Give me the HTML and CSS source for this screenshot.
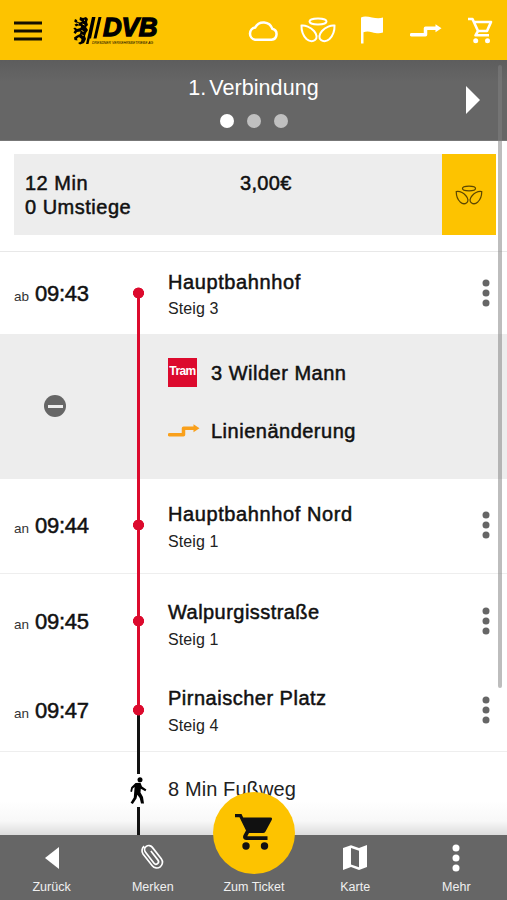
FILE: index.html
```html
<!DOCTYPE html>
<html lang="de">
<head>
<meta charset="utf-8">
<title>DVB – Verbindung</title>
<link rel="stylesheet" href="styles.css">
</head>
<body>
<svg class="defs" aria-hidden="true">
  <symbol id="angel" viewBox="0 0 36 26">
    <ellipse cx="18" cy="4.500" rx="8.500" ry="3"/>
    <path d="M1.500 8.500C5 8 10.500 10 14 14C17 17.500 17.500 21 15 23C12.500 25 9 24.300 6.500 22C3.500 19 1.300 14 1.500 8.500Z"/>
    <path d="M34.500 8.500C31 8 25.500 10 22 14C19 17.500 18.500 21 21 23C23.500 25 27 24.300 29.500 22C32.500 19 34.700 14 34.500 8.500Z"/>
  </symbol>
  <symbol id="detour" viewBox="0 0 32 14">
    <path d="M1.500 10.800H15.500V4.200H26" fill="none" stroke="currentColor" stroke-width="3.500" stroke-linejoin="round" stroke-linecap="round"/>
    <path d="M25.500 .2L31.500 4.200L25.500 8.200Z" fill="currentColor"/>
  </symbol>
  <symbol id="dots" viewBox="0 0 8 28">
    <circle cx="4" cy="4" r="3.500"/><circle cx="4" cy="14" r="3.500"/><circle cx="4" cy="24" r="3.500"/>
  </symbol>
</svg>
<div class="app">
  <header class="topbar">
    <svg class="burger" viewBox="0 0 28 20"><path d="M0 2H28M0 10H28M0 18H28"/></svg>
    <div class="logo">
      <svg class="lion" viewBox="0 0 30 30">
        <path d="M7 1L10 2L13 1L15 3L14 6L15 9L13 11L15 14L13 17L12 20L13 23L11 27L7 28.500L5 27L8 25.500L8.500 23L6 21L4 22.500L4.500 24.500L1.500 24L1 21.500L4 19.500L7 18L7.500 15.500L4 16L2.500 18L.5 16.500L2 14L.3 12.500L2 11.500L4 13L7.500 12L8 10L5 9.500L3 10.500L1.500 8.500L4 7.500L1.200 5.500L2 3L4 4L4.500 6L7 6.500L9 5.500L6.500 4Z"/>
        <path class="gap" d="M3.500 6.800L6 8.200M8.500 14L10.500 16M9.500 8L11.500 9M9 18.500L10.500 20M11 4.500L12 4"/>
        <path d="M19 1H21.500L15.500 28H13ZM19 1H22.500L18 22.500H15ZM25.500 1H28.500L23.500 22.500H20.500Z"/>
      </svg>
      <div class="wordmark"><span class="dvb">DVB</span><span class="claim">DRESDNER VERKEHRSBETRIEBE AG</span></div>
    </div>
    <nav class="tools">
      <svg class="cloud" viewBox="0 0 32 22"><path d="M8 19.700H24.500A5.600 5.600 0 0 0 25.300 8.700A9.300 9.300 0 0 0 8.200 7.500A6.200 6.200 0 0 0 8 19.700Z"/></svg>
      <svg class="wings"><use href="#angel"/></svg>
      <svg class="flag" viewBox="0 0 24 28"><path d="M1 27.500V1.500C4-.2 8 .6 12 1.500C16 2.400 20 2.500 23 1.600V16.500C19 18 15.500 17 12 16.200C9 15.500 6 15.300 3.500 16.300V27.500Z"/></svg>
      <svg class="change"><use href="#detour"/></svg>
      <svg class="cart" viewBox="0 0 26 27"><path d="M1 2H5.500L11 14H20L24 5H7M11 14L8.500 18.300H22" fill="none" stroke="#fff" stroke-width="2.600" stroke-linejoin="round"/><circle cx="8.700" cy="23.800" r="2.500"/><circle cx="20.500" cy="23.800" r="2.500"/></svg>
    </nav>
  </header>

  <section class="pager">
    <h1>1.<span>Verbindung</span></h1>
    <div class="bullets"><i class="on"></i><i></i><i></i></div>
    <svg class="next" viewBox="0 0 14 28"><path d="M0 0L14 14L0 28Z"/></svg>
  </section>

  <main class="content">
    <section class="summary">
      <div class="duration">12 Min<br>0 Umstiege</div>
      <div class="price">3,00€</div>
      <div class="badge"><svg><use href="#angel"/></svg></div>
    </section>

    <section class="row stop first">
      <div class="time"><small>ab</small>09:43</div>
      <div class="track"></div>
      <div class="place"><h2>Hauptbahnhof</h2><p>Steig 3</p></div>
      <svg class="more"><use href="#dots"/></svg>
    </section>
    <section class="row ride">
      <div class="collapse"><i></i></div>
      <div class="track"></div>
      <div class="lines">
        <div class="line"><span class="tram"><b>Tram</b></span><h2>3 Wilder Mann</h2></div>
        <div class="line"><svg class="notice"><use href="#detour"/></svg><h2>Linienänderung</h2></div>
      </div>
    </section>
    <section class="row stop second">
      <div class="time"><small>an</small>09:44</div>
      <div class="track"></div>
      <div class="place"><h2>Hauptbahnhof Nord</h2><p>Steig 1</p></div>
      <svg class="more"><use href="#dots"/></svg>
    </section>
    <section class="row stop third">
      <div class="time"><small>an</small>09:45</div>
      <div class="track"></div>
      <div class="place"><h2>Walpurgisstraße</h2><p>Steig 1</p></div>
      <svg class="more"><use href="#dots"/></svg>
    </section>
    <section class="row stop fourth">
      <div class="time"><small>an</small>09:47</div>
      <div class="track"></div>
      <div class="place"><h2>Pirnaischer Platz</h2><p>Steig 4</p></div>
      <svg class="more"><use href="#dots"/></svg>
    </section>
    <section class="row walk">
      <div></div>
      <div class="track">
        <svg viewBox="0 0 17 28"><circle cx="10" cy="2.700" r="2.500"/><path d="M5.500 6L10.500 5.800L12 9.500L16.400 12.500L15.300 14.200L10.800 11.800L10.500 15.500L13 20L14 26.500H11L9.700 21L7.300 17.800L6.500 21.500L2.800 27L.6 25.700L3.800 20.500L4.600 10L2.800 11.500L2 15L.3 14.500L1.200 10.200Z"/></svg>
      </div>
      <div class="place">8 Min Fußweg</div>
    </section>
  </main>

  <footer class="tabs">
    <div class="tab"><svg class="back" viewBox="0 0 14 22"><path d="M14 0L0 11L14 22Z"/></svg><span>Zurück</span></div>
    <div class="tab"><svg class="clip" viewBox="0 0 24 26"><path transform="rotate(-38 12 13)" d="M6 8V19.500A5.700 5.700 0 0 0 17.400 19.500V4.700A4.200 4.200 0 0 0 9 4.700V18.500A2.500 2.500 0 0 0 14 18.500V7M6 8V4.500A5.700 5.700 0 0 1 11.700-.9"/></svg><span>Merken</span></div>
    <div class="tab ticket">
      <div class="fab"><svg viewBox="0 0 38 38"><path d="M0 1H6.500L8.200 4.500H35.500Q37.800 4.500 36.700 7L30.500 18.500Q29.600 20 28 20H14L12.300 23.300H32.500V27H11.500C7.500 27 7.600 23.500 8.700 21.700L11 17.500L4.500 4.300H0Z"/><circle cx="11" cy="33" r="3.700"/><circle cx="29.500" cy="33" r="3.700"/></svg></div>
      <span>Zum Ticket</span>
    </div>
    <div class="tab"><svg class="map" viewBox="0 0 24 25"><path fill-rule="evenodd" d="M0 3L8 .3L16 3L24 0V22L16 25L8 22L0 25ZM8 3V19.500L16 22.200V5.700Z"/></svg><span>Karte</span></div>
    <div class="tab"><svg class="menu"><use href="#dots"/></svg><span>Mehr</span></div>
  </footer>
  <div class="scrollbar"></div>
</div>
</body>
</html>
```
FILE: styles.css
```css
* { box-sizing: border-box; }
body { margin: 0; font-family: "Liberation Sans", Arial, sans-serif; color: #111; background: #fff; }
h1, h2, p { margin: 0; font-weight: 400; }
svg { display: block; flex: none; }
.defs { position: absolute; width: 0; height: 0; }
.app { position: relative; width: 507px; height: 900px; overflow: hidden; display: flex; flex-direction: column; }

.topbar { height: 60px; flex: none; background: #fdc300; display: flex; padding-left: 14px; }
.burger { width: 28px; height: 20px; margin-top: 21px; stroke: #151000; stroke-width: 3; }
.logo { display: flex; margin: 16px 0 0 31px; width: 90px; }
.lion { width: 30px; height: 30px; }
.lion .gap { stroke: #fdc300; stroke-width: 1; fill: none; }
.wordmark { display: flex; flex-direction: column; color: #000; }
.dvb { font: italic 700 26px/20px "Liberation Sans", sans-serif; -webkit-text-stroke: 1.3px #000; margin-top: 1px; letter-spacing: -.2px; }
.claim { font: italic 3.4px/4px "Liberation Sans", sans-serif; margin: 4px 0 0 -11px; white-space: nowrap; }
.tools { flex: 1; display: flex; fill: #fff; color: #fff; }
.cloud { width: 32px; height: 22px; margin: 20px 0 0 84px; fill: none; stroke: #fff; stroke-width: 2.5; }
.wings { width: 36px; height: 26px; margin: 17px 0 0 21px; fill: none; stroke: #fff; stroke-width: 2; }
.flag { width: 24px; height: 28px; margin: 16px 0 0 24px; }
.change { width: 32px; height: 14px; margin: 24px 0 0 26px; }
.cart { width: 26px; height: 27px; margin: 17px 0 0 25px; }

.pager { position: relative; height: 81px; flex: none; background: linear-gradient(#5d5d5d, #666 22px); border-bottom: 1px solid #777; color: #fff; display: flex; flex-direction: column; align-items: center; }
.pager h1 { font-size: 21.5px; line-height: 26px; margin-top: 15px; letter-spacing: .05px; }
.pager h1 span { margin-left: 3px; }
.bullets { display: flex; gap: 13px; margin-top: 13px; }
.bullets i { width: 14px; height: 14px; border-radius: 50%; background: #c0c0c0; }
.bullets .on { background: #fff; }
.next { position: absolute; right: 27px; top: 26px; width: 14px; height: 28px; fill: #fff; }

.summary { height: 81px; margin: 13px 11px 16px 14px; background: #ededed; display: grid; grid-template-columns: 215px 1fr 54px; padding-left: 11px; font-size: 20px; line-height: 24px; letter-spacing: .5px; -webkit-text-stroke: .5px #111; }
.duration, .price { padding-top: 17px; }
.price { letter-spacing: .3px; }
.badge { background: #fdc300; display: grid; place-items: center; }
.badge svg { width: 28px; height: 20px; fill: none; stroke: #5c4700; stroke-width: 1.6; }

.row { display: grid; grid-template-columns: 133px 11px 1fr 25px; }
.row h2 { font-size: 20px; line-height: 24px; letter-spacing: .6px; -webkit-text-stroke: .5px #111; white-space: nowrap; }
.row p { font-size: 16px; line-height: 20px; color: #222; letter-spacing: .1px; }
.place { padding-left: 24px; }
.stop .time { padding: calc(var(--dot) - 12px) 0 0 14px; font-size: 22px; line-height: 26px; -webkit-text-stroke: .5px #111; letter-spacing: -.25px; }
.time small { font-size: 13.5px; margin-right: 6px; letter-spacing: 0; color: #333; -webkit-text-stroke: 0; }
.more { width: 8px; height: 28px; margin: calc(var(--dot) - 14px) 0 0; fill: #666; }
.track { --from: #dc0a2d; --to: #dc0a2d; display: grid; justify-content: center; background: linear-gradient(var(--from), var(--from)) 4px 0 / 3px 100% no-repeat; }
.stop .track { background: radial-gradient(circle at 5.5px var(--dot), #dc0a2d 5.2px, transparent 5.8px), linear-gradient(var(--from) var(--dot), var(--to) var(--dot)) 4px 0 / 3px 100% no-repeat; }
.first { --dot: 42px; height: 83px; background: linear-gradient(#e8e8e8 1px, transparent 1px); }
.first .track { --from: transparent; }
.first .place { padding-top: 19px; }
.first p { margin-top: 5px; }
.ride { height: 145px; background: #ededed; }
.collapse { padding: 61px 0 0 44px; }
.collapse i { width: 22px; height: 22px; border-radius: 50%; background: #666; display: grid; place-items: center; }
.collapse i::before { content: ""; width: 15px; height: 3px; background: #ededed; }
.lines { padding: 24px 0 0 24px; display: flex; flex-direction: column; gap: 29px; }
.line { display: flex; align-items: center; height: 29px; }
.line h2 { margin-left: 14px; letter-spacing: .5px; }
.tram { width: 29px; height: 29px; background: #dc0a2d; color: #fff; font-size: 12px; letter-spacing: -.6px; display: grid; place-items: center; line-height: 29px; }
.tram b { margin-top: -2px; }
.notice { width: 32px; height: 14px; color: #f9a01b; }
.notice + h2 { margin-left: 11px; }
.second { --dot: 46px; height: 94px; }
.second .place { padding-top: 23px; }
.second p { margin-top: 6px; }
.third { --dot: 48px; height: 92px; background: linear-gradient(#eee 1px, transparent 1px); }
.third .place { padding-top: 27px; }
.third h2 { letter-spacing: .45px; }
.third p { margin-top: 6px; }
.fourth { --dot: 45px; height: 86px; }
.fourth .track { --to: #111; }
.fourth .place { padding-top: 21px; }
.fourth h2 { letter-spacing: .5px; }
.fourth p { margin-top: 6px; }
.walk { height: 84px; background: linear-gradient(#eee 1px, #fff 1px, #fff 50px, #f8f8f8 70px, #dcdcdc); }
.walk .track { grid-template-rows: 23px 34px 1fr; background: linear-gradient(#111 23px, transparent 23px, transparent 56px, #111 56px) 4px 0 / 3px 100% no-repeat; }
.walk .track svg { width: 17px; height: 28px; grid-row: 2; align-self: center; }
.walk .place { padding-top: 26px; font-size: 20px; line-height: 24px; letter-spacing: .1px; color: #222; }

.tabs { height: 65px; flex: none; background: #666; color: #fff; fill: #fff; display: grid; grid-template-columns: repeat(5, 101.2px); padding-left: 1px; position: relative; }
.tab { display: flex; flex-direction: column; align-items: center; justify-content: space-between; padding: 9px 0 5px; height: 65px; font-size: 12.5px; line-height: 16px; color: #f0f0f0; }
.back { width: 14px; height: 22px; margin-top: 3px; }
.clip { width: 24px; height: 26px; fill: none; stroke: #fff; stroke-width: 1.7; overflow: visible; }
.map { width: 24px; height: 25px; margin-top: 1px; }
.menu { width: 8px; height: 28px; }
.ticket { justify-content: flex-end; }
.fab { position: absolute; top: -43px; left: 213px; width: 82px; height: 82px; border-radius: 50%; background: #fdc300; fill: #111; }
.fab svg { width: 38px; height: 38px; margin: 21px 0 0 22px; }
.scrollbar { position: absolute; right: 5px; top: 65px; width: 4px; height: 623px; border-radius: 2px; background: rgba(128, 128, 128, .52); }
```
